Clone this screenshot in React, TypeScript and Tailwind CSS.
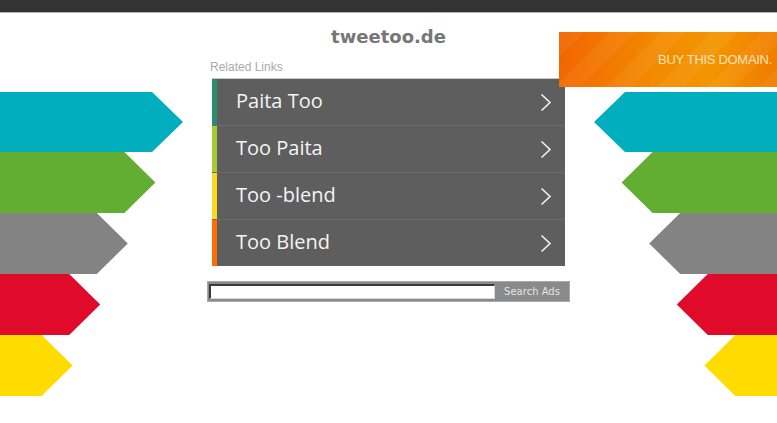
import React from 'react';

const links = [
  { label: 'Paita Too', stripe: 'bg-[#2a8b6f]' },
  { label: 'Too Paita', stripe: 'bg-[#a8c93a]' },
  { label: 'Too -blend', stripe: 'bg-[#ffd81c]' },
  { label: 'Too Blend', stripe: 'bg-[#ff6d00]' },
];

// arrow bands, top/bottom in px from the top of the strip
const bands = [
  { y0: 0, y1: 60, fill: '#00aebe' },
  { y0: 60, y1: 121, fill: '#62ae33' },
  { y0: 121, y1: 182, fill: '#838383' },
  { y0: 182, y1: 243, fill: '#e00b2b' },
  { y0: 243, y1: 304, fill: '#ffdc00' },
];

function Arrows({ side }: { side: 'left' | 'right' }) {
  return (
    <svg width="184" height="304" viewBox="0 0 184 304" className="block">
      {bands.map((b, i) => {
        const tip = 183 - i * 27.6;
        const shoulder = tip - 31;
        const mid = (b.y0 + b.y1) / 2;
        const pts =
          side === 'left'
            ? `0,${b.y0} ${shoulder},${b.y0} ${tip},${mid} ${shoulder},${b.y1} 0,${b.y1}`
            : `184,${b.y0} ${184 - shoulder},${b.y0} ${184 - tip},${mid} ${184 - shoulder},${b.y1} 184,${b.y1}`;
        return <polygon key={i} points={pts} fill={b.fill} />;
      })}
    </svg>
  );
}

function Chevron() {
  return (
    <svg width="12" height="19" viewBox="0 0 12 19" className="block">
      <path d="M1.5 1.5 L10 9.5 L1.5 17.5" fill="none" stroke="#f2f2f2" strokeWidth="1.6" />
    </svg>
  );
}

export default function App() {
  return (
    <div className="relative w-[777px] h-[423px] overflow-hidden bg-white font-['Open_Sans',sans-serif]">
      {/* Top bar */}
      <div className="h-[13px] bg-[#333333] border-b border-[#b5b5b5]" />

      {/* Buy banner */}
      <div className="absolute top-[32px] right-0 w-[218px] h-[55px] flex items-center justify-end pr-[5px] bg-[linear-gradient(100deg,#f26400_0%,#f38a00_45%,#f39500_70%,#f07c00_100%)]">
        <div className="absolute inset-0 bg-[repeating-linear-gradient(135deg,rgba(255,255,255,0.05)_0px,rgba(255,255,255,0.05)_18px,rgba(255,255,255,0)_18px,rgba(255,255,255,0)_36px)]" />
        <span className="relative text-[13px] font-light tracking-[-0.3px] text-[#ffe2b8] font-['Liberation_Sans',sans-serif]">
          BUY THIS DOMAIN.
        </span>
      </div>

      <div className="flex">
        <div className="w-[184px] pt-[79px]">
          <Arrows side="left" />
        </div>

        <main className="flex-1 flex flex-col items-center">
          <h1 className="mt-[13px] h-[21px] leading-[21px] text-[18px] font-bold text-[#777777] font-['DejaVu_Sans',sans-serif]">
            tweetoo.de
          </h1>

          <div className="w-[353px] mt-[13px]">
            <div className="-ml-[2px] h-[14px] leading-[14px] text-[12px] text-[#a9a9a9] font-['Liberation_Sans',sans-serif]">
              Related Links
            </div>

            <ul className="mt-[4px] bg-[#5e5e5e]">
              {links.map((l, i) => (
                <li
                  key={l.label}
                  className={`flex h-[47px] border-t ${i === 0 ? 'border-[#c4c4c4]' : 'border-[#6b6b6b]'}`}
                >
                  <span className={`w-[5px] ${l.stripe}`} />
                  <div className="flex-1 flex items-center justify-between pl-[19px] pr-[13px]">
                    <span className="text-[20px] leading-[26px] -mt-[2px] text-[#f4f4f4]">{l.label}</span>
                    <Chevron />
                  </div>
                </li>
              ))}
            </ul>
          </div>

          <div className="mt-[15px] w-[363px] h-[21px] flex items-center bg-[#8a8a8a] border border-[#a9a9a9] pl-[1px]">
            <div className="w-[286px] h-[15px] bg-white border-t-2 border-l-2 border-r border-b border-t-[#3a3a3a] border-l-[#3a3a3a] border-r-[#d8d8d8] border-b-[#d8d8d8]" />
            <button className="flex-1 text-center text-[10px] text-[#e4e4e4] font-['DejaVu_Sans',sans-serif]">
              Search Ads
            </button>
          </div>
        </main>

        <div className="w-[184px] pt-[79px]">
          <Arrows side="right" />
        </div>
      </div>
    </div>
  );
}
